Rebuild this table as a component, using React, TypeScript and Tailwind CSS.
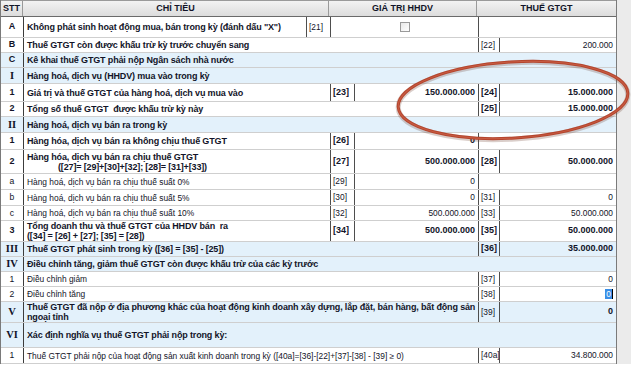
import React from "react";

type Kind = "full" | "both" | "gia" | "thue" | "a";

interface Row {
  stt: string;
  roman?: boolean;
  sttBold?: boolean;
  lines: string[];
  indent?: boolean;
  bold: boolean;
  blue?: boolean;
  h: string;
  kind: Kind;
  c1?: string;
  v1?: string;
  c2?: string;
  v2?: string;
  codeBold?: boolean;
  numBold?: boolean;
  sel?: boolean;
}

const rows: Row[] = [
  { stt: "A", sttBold: true, lines: ['Không phát sinh hoạt động mua, bán trong kỳ (đánh dấu "X")'], bold: true, h: "h-[21px]", kind: "a", c1: "[21]" },
  { stt: "B", sttBold: true, lines: ["Thuế GTGT còn được khấu trừ kỳ trước chuyển sang"], bold: true, h: "h-[15px]", kind: "thue", c2: "[22]", v2: "200.000" },
  { stt: "C", sttBold: true, lines: ["Kê khai thuế GTGT phải nộp Ngân sách nhà nước"], bold: true, blue: true, h: "h-[15px]", kind: "full" },
  { stt: "I", roman: true, lines: ["Hàng hoá, dịch vụ (HHDV) mua vào trong kỳ"], bold: true, blue: true, h: "h-[16px]", kind: "full" },
  { stt: "1", sttBold: true, lines: ["Giá trị và thuế GTGT của hàng hoá, dịch vụ mua vào"], bold: true, h: "h-[18px]", kind: "both", c1: "[23]", v1: "150.000.000", c2: "[24]", v2: "15.000.000", codeBold: true, numBold: true },
  { stt: "2", sttBold: true, lines: ["Tổng số thuế GTGT  được khấu trừ kỳ này"], bold: true, h: "h-[15px]", kind: "thue", c2: "[25]", v2: "15.000.000", codeBold: true, numBold: true },
  { stt: "II", roman: true, lines: ["Hàng hoá, dịch vụ bán ra trong kỳ"], bold: true, blue: true, h: "h-[16px]", kind: "full" },
  { stt: "1", sttBold: true, lines: ["Hàng hóa, dịch vụ bán ra không chịu thuế GTGT"], bold: true, h: "h-[17px]", kind: "gia", c1: "[26]", v1: "0", codeBold: true, numBold: true },
  { stt: "2", sttBold: true, lines: ["Hàng hóa, dịch vụ bán ra chịu thuế GTGT", "([27]= [29]+[30]+[32]; [28]= [31]+[33])"], indent: true, bold: true, h: "h-[24px]", kind: "both", c1: "[27]", v1: "500.000.000", c2: "[28]", v2: "50.000.000", codeBold: true, numBold: true },
  { stt: "a", lines: ["Hàng hoá, dịch vụ bán ra chịu thuế suất 0%"], bold: false, h: "h-[16px]", kind: "gia", c1: "[29]", v1: "0" },
  { stt: "b", lines: ["Hàng hoá, dịch vụ bán ra chịu thuế suất 5%"], bold: false, h: "h-[16px]", kind: "both", c1: "[30]", v1: "0", c2: "[31]", v2: "0" },
  { stt: "c", lines: ["Hàng hoá, dịch vụ bán ra chịu thuế suất 10%"], bold: false, h: "h-[15px]", kind: "both", c1: "[32]", v1: "500.000.000", c2: "[33]", v2: "50.000.000" },
  { stt: "3", sttBold: true, lines: ["Tổng doanh thu và thuế GTGT của HHDV bán  ra", "([34] = [26] + [27]; [35] = [28])"], bold: true, h: "h-[21px]", kind: "both", c1: "[34]", v1: "500.000.000", c2: "[35]", v2: "50.000.000", codeBold: true, numBold: true },
  { stt: "III", roman: true, lines: ["Thuế GTGT phát sinh trong kỳ ([36] = [35] - [25])"], bold: true, blue: true, h: "h-[15px]", kind: "thue", c2: "[36]", v2: "35.000.000", codeBold: true, numBold: true },
  { stt: "IV", roman: true, lines: ["Điều chỉnh tăng, giảm thuế GTGT còn được khấu trừ của các kỳ trước"], bold: true, blue: true, h: "h-[15px]", kind: "full" },
  { stt: "1", lines: ["Điều chỉnh giảm"], bold: false, h: "h-[15px]", kind: "thue", c2: "[37]", v2: "0" },
  { stt: "2", lines: ["Điều chỉnh tăng"], bold: false, h: "h-[15px]", kind: "thue", c2: "[38]", v2: "0", sel: true },
  { stt: "V", roman: true, lines: ["Thuế GTGT đã nộp ở địa phương khác của hoạt động kinh doanh xây dựng, lắp đặt, bán hàng, bất động sản", "ngoại tỉnh"], bold: true, blue: true, h: "h-[21px]", kind: "thue", c2: "[39]", v2: "0", numBold: true },
  { stt: "VI", roman: true, lines: ["Xác định nghĩa vụ thuế GTGT phải nộp trong kỳ:"], bold: true, blue: true, h: "h-[25px]", kind: "full" },
  { stt: "1", lines: ["Thuế GTGT phải nộp của hoạt động sản xuất kinh doanh trong kỳ ([40a]=[36]-[22]+[37]-[38] - [39] ≥ 0)"], bold: false, h: "h-[16px]", kind: "thue", c2: "[40a]", v2: "34.800.000" },
];

function Code({ text, bold, w }: { text?: string; bold?: boolean; w: string }) {
  return (
    <div className={`${w} shrink-0 h-full border-l border-[#4e4e4e] flex items-center pl-[2px] ${bold ? "font-bold text-[9px]" : "text-[8.4px]"}`}>
      {text}
    </div>
  );
}

function Val({ text, bold, w, sel }: { text?: string; bold?: boolean; w: string; sel?: boolean }) {
  return (
    <div className={`${w} shrink-0 h-full border-l border-[#4e4e4e] flex items-center justify-end pr-[3px] ${bold ? "font-bold text-[9px]" : "text-[8.4px]"}`}>
      {sel ? <span className="bg-[#3a8ee6] text-white px-[1px] leading-[10px] border-r border-black">{text}</span> : text}
    </div>
  );
}

function TableRow({ r }: { r: Row }) {
  const textW =
    r.kind === "full" ? "flex-1" : r.kind === "thue" ? "w-[454px]" : r.kind === "a" ? "w-[282px]" : "w-[306px]";
  return (
    <div className={`flex ${r.h} border-b border-[#cfcfcf] ${r.blue ? "bg-[#e3f1fb]" : "bg-white"}`}>
      <div
        className={`w-[23px] shrink-0 border-r border-[#3c3c3c] flex items-center justify-center ${
          r.roman
            ? "font-['Liberation_Serif',serif] font-bold text-[10.5px]"
            : r.sttBold
            ? "font-bold text-[9px]"
            : "text-[8.6px]"
        }`}
      >
        {r.stt}
      </div>
      <div
        className={`${textW} min-w-0 overflow-hidden pl-[3px] flex flex-col justify-center leading-[10px] whitespace-pre ${
          r.bold ? "font-bold text-[9px] tracking-[-0.15px]" : "text-[8.4px]"
        }`}
      >
        {r.lines.map((l, i) => (
          <div key={i} className={r.indent && i === 1 ? "pl-[31px]" : ""}>
            {l}
          </div>
        ))}
      </div>
      {r.kind === "a" && (
        <>
          <Code text={r.c1} w="w-[24px]" />
          <div className="w-[148px] shrink-0 h-full border-l border-[#4e4e4e] flex items-center justify-center">
            <div className="w-[10px] h-[10px] border border-[#9a9a9a] bg-gradient-to-br from-[#e8e8e8] to-white" />
          </div>
          <div className="flex-1 h-full border-l border-[#4e4e4e]" />
        </>
      )}
      {(r.kind === "both" || r.kind === "gia") && (
        <>
          <Code text={r.c1} bold={r.codeBold} w="w-[24px]" />
          <Val text={r.v1} bold={r.numBold} w="w-[124px]" />
        </>
      )}
      {r.kind === "gia" && <div className="flex-1 h-full border-l border-[#4e4e4e]" />}
      {(r.kind === "both" || r.kind === "thue") && (
        <>
          <Code text={r.c2} bold={r.codeBold} w="w-[21px]" />
          <Val text={r.v2} bold={r.numBold} w="flex-1" sel={r.sel} />
        </>
      )}
    </div>
  );
}

export default function App() {
  return (
    <div className="w-[631px] h-[375px] bg-white overflow-hidden font-['Liberation_Sans',Arial,sans-serif] text-[#121428]">
      <div className="relative flex h-[364px] overflow-hidden">
        <div className="w-[617px] shrink-0 border-l border-r border-[#7a7a7a]">
          <div className="flex h-[17px] border-t border-[#9a9a9a] border-b border-b-[#6a6a6a] bg-gradient-to-b from-[#f3f3f3] to-[#dcdcdc] font-bold text-[9px]">
            <div className="w-[22px] shrink-0 border-r border-[#9a9a9a] flex items-center pl-[2px]">STT</div>
            <div className="w-[306px] shrink-0 border-r border-[#9a9a9a] flex items-center justify-center">CHỈ TIÊU</div>
            <div className="w-[148px] shrink-0 border-r border-[#9a9a9a] flex items-center justify-center">GIÁ TRỊ HHDV</div>
            <div className="flex-1 flex items-center justify-center">THUẾ GTGT</div>
          </div>
          {rows.map((r, i) => (
            <TableRow key={i} r={r} />
          ))}
        </div>
        <div className="flex-1 bg-[#ebebeb]" />
        <svg className="absolute left-0 top-0 pointer-events-none" width="631" height="364" viewBox="0 0 631 364">
          <ellipse cx="513" cy="101" rx="115" ry="38" transform="rotate(-3.5 513 101)" fill="none" stroke="#6b3a2a" strokeOpacity="0.25" strokeWidth="5" />
          <ellipse cx="513" cy="100" rx="115" ry="38" transform="rotate(-3.5 513 100)" fill="none" stroke="#b5452d" strokeWidth="3" />
          <ellipse cx="513" cy="100" rx="115" ry="38" transform="rotate(-3.5 513 100)" fill="none" stroke="#d9735a" strokeOpacity="0.5" strokeWidth="1" />
        </svg>
      </div>
    </div>
  );
}
